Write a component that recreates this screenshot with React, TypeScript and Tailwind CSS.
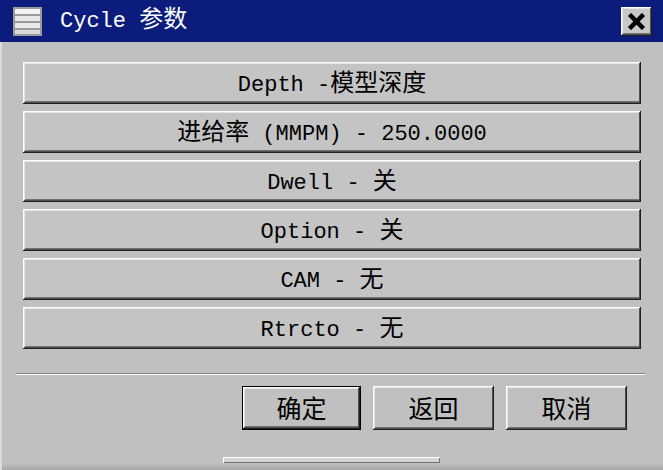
const rows = [
  "Depth -模型深度",
  "进给率 (MMPM) - 250.0000",
  "Dwell - 关",
  "Option - 关",
  "CAM - 无",
  "Rtrcto - 无",
];

const bevel =
  "shadow-[inset_-1px_-1px_#202020,inset_1px_1px_#ffffff,inset_-2px_-2px_#505050,inset_2px_2px_#e4e4e4,inset_0_-3px_#707070]";

const mono = { fontFamily: '"Liberation Mono", "Noto Sans CJK SC", monospace' };
const cjk = { fontFamily: '"Noto Sans CJK SC", "Liberation Sans", sans-serif' };

// wrap runs of CJK characters so they can be set a little larger
function Label({ text }: { text: string }) {
  const parts = text.split(/([\u4e00-\u9fff]+)/).filter(Boolean);
  return (
    <span className="whitespace-pre leading-none">
      {parts.map((p, i) =>
        /[\u4e00-\u9fff]/.test(p) ? (
          <span key={i} className="text-[24px]" style={cjk}>
            {p}
          </span>
        ) : (
          <span key={i}>{p}</span>
        )
      )}
    </span>
  );
}

export default function App() {
  return (
    <div className="w-[663px] h-[470px] bg-[#c0c0c0] flex flex-col overflow-hidden">
      {/* title bar */}
      <div className="h-[42px] bg-[#0b1c7c] flex items-center pl-[13px] pr-[11px] shrink-0">
        <svg width="29" height="29" viewBox="0 0 29 29">
          <rect x="0" y="0" width="29" height="29" fill="#9a9a9a" />
          <rect x="2" y="2" width="25" height="5" fill="#f4f4f4" />
          <rect x="2" y="9" width="25" height="5" fill="#e8e8e8" />
          <rect x="2" y="16" width="25" height="5" fill="#e8e8e8" />
          <rect x="2" y="23" width="25" height="4" fill="#dcdcdc" />
        </svg>
        <span className="ml-[18px] text-white text-[22px]" style={mono}>
          <Label text="Cycle 参数" />
        </span>
        <div
          className={`ml-auto w-[31px] h-[29px] bg-[#c8c8c8] flex items-center justify-center ${bevel}`}
        >
          <svg width="19" height="17" viewBox="0 0 19 17">
            <path d="M2.5 1.5 L16.5 15.5 M16.5 1.5 L2.5 15.5" stroke="#000" strokeWidth="4.5" />
          </svg>
        </div>
      </div>

      {/* body */}
      <div className="flex-1 flex flex-col border-l-2 border-[#dcdcdc]">
        <div className="flex flex-col gap-[7px] pt-[20px] pl-[21px] pr-[22px]">
          {rows.map((r) => (
            <div
              key={r}
              className={`h-[42px] flex items-center justify-center text-black text-[22px] bg-[#c4c4c4] ${bevel}`}
              style={mono}
            >
              <Label text={r} />
            </div>
          ))}
        </div>

        <div className="mt-[24px] ml-[14px] mr-[18px] h-[2px] border-t border-[#808080] border-b border-b-white" />

        <div className="mt-[11px] flex justify-end gap-[12px] pr-[36px]">
          <div className="w-[119px] h-[44px] border border-black flex">
            <div
              className={`flex-1 flex items-center justify-center text-[25px] text-black ${bevel}`}
              style={cjk}
            >
              确定
            </div>
          </div>
          <div
            className={`w-[121px] h-[44px] flex items-center justify-center text-[25px] text-black ${bevel}`}
            style={cjk}
          >
            返回
          </div>
          <div
            className={`w-[121px] h-[44px] flex items-center justify-center text-[25px] text-black ${bevel}`}
            style={cjk}
          >
            取消
          </div>
        </div>

        <div className="mt-[27px] ml-[221px] w-[217px] h-[6px] bg-[#d4d4d4] shadow-[inset_1px_1px_#ffffff,inset_-1px_-1px_#707070]" />
        <div className="flex-1 bg-gradient-to-b from-[#c0c0c0] to-[#a8a8a8]" />
      </div>
    </div>
  );
}
